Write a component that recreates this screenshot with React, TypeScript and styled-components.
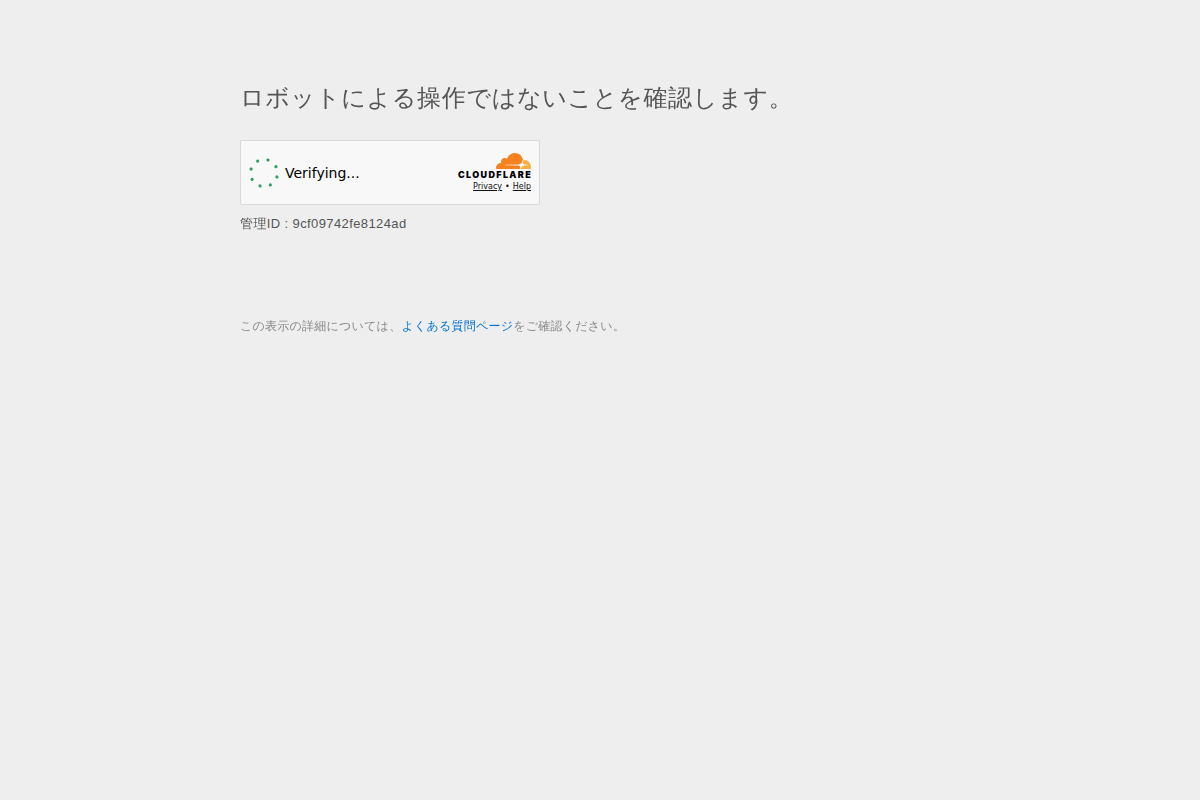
import React from "react";
import styled, { createGlobalStyle } from "styled-components";

const GlobalStyle = createGlobalStyle`
  *, *::before, *::after { box-sizing: border-box; }
  body {
    margin: 0;
    background: #eee;
    color: #555;
    font-family: "Liberation Sans", "WenQuanYi Zen Hei", "Noto Sans CJK JP", sans-serif;
  }
`;

const Page = styled.main`
  max-width: 720px;
  margin: 0 auto;
  padding: 80px 0 40px;
`;

const Title = styled.h1`
  margin: 0 0 24px;
  font-size: 24px;
  line-height: 36px;
  font-weight: 400;
  letter-spacing: 0.03em;
`;

const Widget = styled.section`
  display: flex;
  align-items: center;
  width: 300px;
  max-width: 100%;
  height: 65px;
  padding: 0 8px;
  border: 1px solid #d9d9d9;
  border-radius: 2px;
  background: #f8f8f8;
  color: #111;
  font-family: "DejaVu Sans", sans-serif;
`;

const Spinner = styled.svg`
  flex: none;
  width: 30px;
  height: 30px;
  margin-right: 6px;
  fill: #2f9e5f;
`;

const Status = styled.span`
  flex: 1;
  font-size: 14px;
  line-height: 20px;
  color: #000;
`;

const Brand = styled.div`
  display: flex;
  flex-direction: column;
  align-items: flex-end;
  gap: 4px;
`;

const Logo = styled.svg`
  display: block;
  width: 73px;
  height: 25px;
  overflow: visible;
`;

const Wordmark = styled.text`
  font-family: Inter, sans-serif;
  font-size: 9px;
  font-weight: 900;
  letter-spacing: 0.15em;
  fill: #000;
`;

const Legal = styled.nav`
  display: flex;
  gap: 3px;
  font-size: 8px;
  line-height: 10px;
`;

const LegalLink = styled.a`
  color: #111;
  text-decoration: underline;
`;

const ManageId = styled.p`
  margin: 9px 0 0;
  font-size: 13px;
  line-height: 20px;
  letter-spacing: 0.03em;
`;

const Note = styled.p`
  margin: 83px 0 0;
  font-size: 12px;
  line-height: 18px;
  letter-spacing: 0.02em;
  color: #888;
`;

const NoteLink = styled.a`
  color: #0073d5;
  text-decoration: none;
`;

const dotAngles = [17, 62, 107, 152, 197, 242, 287, 332];

export default function App() {
  return (
    <>
      <GlobalStyle />
      <Page>
        <Title>ロボットによる操作ではないことを確認します。</Title>
        <Widget>
          <Spinner viewBox="0 0 30 30" aria-hidden="true">
            {dotAngles.map((angle) => (
              <circle key={angle} cx="15" cy="1.5" r="1.6" transform={`rotate(${angle} 15 15)`} />
            ))}
          </Spinner>
          <Status role="status">Verifying...</Status>
          <Brand>
            <Logo viewBox="0 0 73 25" role="img" aria-label="Cloudflare">
              <path
                fill="#f6821f"
                d="M61.8848 15.7841L62.0632 15.1578C62.2758 14.4126 62.1967 13.7239 61.8401 13.2178C61.5118 12.7517 60.9649 12.4773 60.3007 12.4453L47.7201 12.2836C47.6811 12.2829 47.6428 12.2728 47.6083 12.2542C47.5738 12.2356 47.5442 12.209 47.5217 12.1766C47.4996 12.1431 47.4856 12.1049 47.4807 12.0649C47.4758 12.025 47.4801 11.9844 47.4933 11.9465C47.5149 11.8839 47.5541 11.8291 47.6061 11.7888C47.658 11.7486 47.7204 11.7247 47.7856 11.7199L60.4827 11.5566C61.9889 11.4864 63.6196 10.2462 64.1905 8.73372L64.9146 6.81361C64.9443 6.73242 64.951 6.64444 64.9341 6.55957C64.112 2.80652 60.8115 0 56.8652 0C53.2293 0 50.1421 2.38158 49.0347 5.69186C48.2864 5.12186 47.3535 4.85982 46.4228 4.95823C44.6785 5.13401 43.276 6.55928 43.1034 8.32979C43.059 8.77189 43.0915 9.21845 43.1992 9.64918C40.3497 9.73347 38.0645 12.1027 38.0645 15.0151C38.0649 15.2751 38.0838 15.5347 38.1212 15.7919C38.1294 15.8513 38.1584 15.9057 38.2029 15.9452C38.2474 15.9848 38.3044 16.0068 38.3635 16.0071L61.5894 16.0099C61.6616 16.0088 61.7252 15.9862 61.7772 15.9455C61.8293 15.9049 61.867 15.8483 61.8848 15.7841Z"
              />
              <path
                fill="#fbad41"
                d="M66.0758 6.95285C65.9592 6.95285 65.843 6.95582 65.7274 6.96177C65.6426 6.98437 65.555 7.07806 65.5462 7.10936L65.0515 8.84333C64.8389 9.58847 64.918 10.2766 65.2749 10.7827C65.6029 11.2494 66.1498 11.5233 66.814 11.5552L69.4959 11.7185C69.5705 11.73 69.6654 11.7925 69.687 11.8239C69.7234 11.896 69.7288 12.0173 69.7153 12.0555C69.6546 12.1727 69.5509 12.2531 69.4236 12.2821L66.6371 12.4454C65.1243 12.5161 63.4937 13.7558 62.9233 15.2682L62.722 15.8022C62.7105 15.8486 62.7236 15.9189 62.7365 15.9389C62.7669 15.9755 62.8309 16.006 62.8616 16.0072H72.4502C72.5603 15.9893 72.6825 15.8751 72.6984 15.8213C72.8677 15.2094 72.9532 14.5769 72.9525 13.9415C72.9517 10.0817 69.8713 6.95285 66.0758 6.95285Z"
              />
              <Wordmark x="0" y="25">CLOUDFLARE</Wordmark>
            </Logo>
            <Legal>
              <LegalLink href="#privacy">Privacy</LegalLink>
              <span aria-hidden="true">•</span>
              <LegalLink href="#help">Help</LegalLink>
            </Legal>
          </Brand>
        </Widget>
        <ManageId>管理ID : 9cf09742fe8124ad</ManageId>
        <Note>
          この表示の詳細については、<NoteLink href="#faq">よくある質問ページ</NoteLink>をご確認ください。
        </Note>
      </Page>
    </>
  );
}
